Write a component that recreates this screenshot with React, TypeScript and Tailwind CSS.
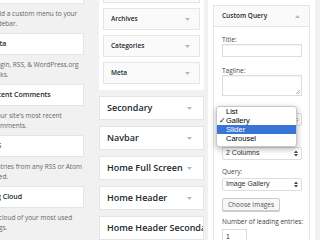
import React from "react";

const DownArrow = () => (
  <svg width="5" height="3" viewBox="0 0 5 3" className="shrink-0">
    <path d="M0 0h5L2.5 3z" fill="#b4b9be" />
  </svg>
);

const UpArrow = () => (
  <svg width="5" height="3" viewBox="0 0 5 3" className="shrink-0">
    <path d="M0 3h5L2.5 0z" fill="#b4b9be" />
  </svg>
);

const SelectArrows = () => (
  <svg width="4" height="7" viewBox="0 0 4 7" className="shrink-0">
    <path d="M0 3h4L2 0.5z M0 4h4L2 6.5z" fill="#444" />
  </svg>
);

const available = [
  { title: "Meta", desc: ["Login, RSS, & WordPress.org", "links."] },
  { title: "Recent Comments", desc: ["Your site\u2019s most recent", "comments."] },
  { title: "RSS", desc: ["Entries from any RSS or Atom", "feed."] },
  { title: "Tag Cloud", desc: ["A cloud of your most used", "tags."] },
];

const Desc = ({ lines }: { lines: string[] }) => (
  <div className="pt-[5px] pb-[4px] pl-[19px] text-[6.5px] leading-[10px] text-[#666]">
    {lines.map((l) => (
      <div key={l} className="whitespace-nowrap">
        {l}
      </div>
    ))}
  </div>
);

const AvailableWidgets = () => (
  <div className="w-[84px] shrink-0 overflow-hidden">
    <div className="w-[110px] -ml-[26px]">
      <div className="h-[4px] bg-white border-x border-b border-[#e5e5e5]" />
      <Desc lines={["Add a custom menu to your", "sidebar."]} />
      {available.map((w) => (
        <div key={w.title}>
          <div className="h-[22px] bg-white border border-[#e5e5e5] flex items-center pl-[14px] text-[7px] font-semibold text-[#23282d] whitespace-nowrap">
            {w.title}
          </div>
          <Desc lines={w.desc} />
        </div>
      ))}
    </div>
  </div>
);

const SmallWidget = ({ title }: { title: string }) => (
  <div className="h-[22px] bg-[#fafafa] border border-[#e5e5e5] flex items-center justify-between pl-[7px] pr-[9px] text-[6.5px] font-semibold text-[#23282d]">
    <span>{title}</span>
    <DownArrow />
  </div>
);

const Sidebar = ({ title }: { title: string }) => (
  <div className="h-[24px] bg-white border border-[#e5e5e5] flex items-center justify-between pl-[7px] pr-[11px] text-[9px] font-semibold text-[#23282d] whitespace-nowrap overflow-hidden">
    <span>{title}</span>
    <DownArrow />
  </div>
);

const MiddleColumn = () => (
  <div className="ml-[15px] w-[105px] shrink-0 flex flex-col gap-[6px]">
    <div className="bg-white px-[4px] pb-[6px] flex flex-col gap-[5px]">
      <div className="h-[3px] bg-[#fafafa] border-x border-b border-[#e5e5e5]" />
      <SmallWidget title="Archives" />
      <SmallWidget title="Categories" />
      <SmallWidget title="Meta" />
    </div>
    <Sidebar title="Secondary" />
    <Sidebar title="Navbar" />
    <Sidebar title="Home Full Screen" />
    <Sidebar title="Home Header" />
    <Sidebar title="Home Header Secondary" />
  </div>
);

const Select = ({ value }: { value: string }) => (
  <div className="h-[13px] bg-white border border-[#ddd] rounded-[2px] flex items-center justify-between pl-[3px] pr-[3px] text-[7px] text-[#333] font-['Liberation_Sans',sans-serif]">
    <span>{value}</span>
    <SelectArrows />
  </div>
);

const Label = ({ children }: { children: React.ReactNode }) => (
  <div className="text-[6.5px] leading-[8px] text-[#444] whitespace-nowrap">{children}</div>
);

const menuItems = ["List", "Gallery", "Slider", "Carousel"];

const CustomQuery = () => (
  <div className="ml-[4px] w-[107px] shrink-0 bg-white px-[5px] pt-[5px]">
    <div className="relative h-[300px]">
      <div className="h-[22px] bg-[#fafafa] border border-[#e5e5e5] flex items-center justify-between pl-[8px] pr-[9px] text-[6.5px] font-semibold text-[#23282d]">
        <span>Custom Query</span>
        <UpArrow />
      </div>
      <div className="bg-white border-x border-[#e5e5e5] pl-[8px] pr-[7px] pt-[9px] flex flex-col h-full">
        <Label>Title:</Label>
        <div className="h-[13px] border border-[#ddd] shadow-[inset_0_1px_1px_rgba(0,0,0,0.05)]" />
        <div className="mt-[10px]">
          <Label>Tagline:</Label>
        </div>
        <div className="relative h-[21px] border border-[#ddd] shadow-[inset_0_1px_1px_rgba(0,0,0,0.05)]">
          <svg width="5" height="5" viewBox="0 0 5 5" className="absolute right-[1px] bottom-[1px]">
            <path d="M1 5L5 1M3 5L5 3" stroke="#999" strokeWidth="0.7" />
          </svg>
        </div>
        <div className="mt-[17px]">
          <Select value="Gallery" />
        </div>
        <div className="mt-[21px]">
          <Select value="2 Columns" />
        </div>
        <div className="mt-[8px]">
          <Label>Query:</Label>
        </div>
        <div className="mt-[2px]">
          <Select value="Image Gallery" />
        </div>
        <div className="mt-[7px] self-start h-[13px] px-[5px] bg-[#f7f7f7] border border-[#ccc] rounded-[2px] flex items-center text-[6.5px] text-[#555] shadow-[0_1px_0_#ccc]">
          Choose Images
        </div>
        <div className="mt-[7px]">
          <Label>Number of leading entries:</Label>
        </div>
        <div className="mt-[3px] w-[25px] h-[16px] border border-[#ddd] flex items-center pl-[3px] text-[7px] text-[#333] font-['Liberation_Sans',sans-serif]">
          1
        </div>
      </div>
      <div className="absolute left-[3px] top-[101px] w-[81px] bg-white border border-[#c8c8c8] rounded-[3px] shadow-[0_2px_6px_rgba(0,0,0,0.3)] pb-[3px] font-['Liberation_Sans',sans-serif] text-[7.5px] text-black">
        {menuItems.map((m) => (
          <div
            key={m}
            className={`h-[9px] flex items-center pl-[9px] relative ${m === "Slider" ? "bg-[#3875d7] text-white" : ""}`}
          >
            {m === "Gallery" && <span className="absolute left-[2px]">✓</span>}
            {m}
          </div>
        ))}
      </div>
    </div>
  </div>
);

export default function App() {
  return (
    <div className="w-[320px] h-[240px] overflow-hidden bg-[#f1f1f1] flex items-start font-['Open_Sans',sans-serif]">
      <AvailableWidgets />
      <MiddleColumn />
      <CustomQuery />
    </div>
  );
}
